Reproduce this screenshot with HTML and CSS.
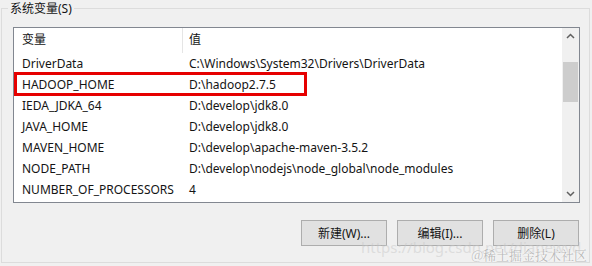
FILE: index.html
```html
<!DOCTYPE html>
<html lang="zh-CN">
<head>
    <meta charset="UTF-8">
    <title>系统变量</title>
    <link rel="stylesheet" href="styles.css">
</head>
<body>
    <section class="group">
        <span class="group-title">系统变量(S)</span>
        <div class="list-box">
            <div class="list">
                <div class="row head">
                    <span class="col-name">变量</span>
                    <span class="col-value">值</span>
                </div>
                <div class="row">
                    <span class="col-name">DriverData</span>
                    <span class="col-value">C:\Windows\System32\Drivers\DriverData</span>
                </div>
                <div class="row">
                    <span class="highlight"></span>
                    <span class="col-name">HADOOP_HOME</span>
                    <span class="col-value">D:\hadoop2.7.5</span>
                </div>
                <div class="row">
                    <span class="col-name">IEDA_JDKA_64</span>
                    <span class="col-value">D:\develop\jdk8.0</span>
                </div>
                <div class="row">
                    <span class="col-name">JAVA_HOME</span>
                    <span class="col-value">D:\develop\jdk8.0</span>
                </div>
                <div class="row">
                    <span class="col-name">MAVEN_HOME</span>
                    <span class="col-value">D:\develop\apache-maven-3.5.2</span>
                </div>
                <div class="row">
                    <span class="col-name">NODE_PATH</span>
                    <span class="col-value">D:\develop\nodejs\node_global\node_modules</span>
                </div>
                <div class="row">
                    <span class="col-name">NUMBER_OF_PROCESSORS</span>
                    <span class="col-value">4</span>
                </div>
            </div>
            <div class="scrollbar">
                <svg class="arrow" width="17" height="17" viewBox="0 0 17 17">
                    <path d="M5 10 L8.5 6.5 L12 10" fill="none" stroke="#606060" stroke-width="1.5"/>
                </svg>
                <div class="track">
                    <div class="thumb"></div>
                </div>
                <svg class="arrow" width="17" height="17" viewBox="0 0 17 17">
                    <path d="M5 7 L8.5 10.5 L12 7" fill="none" stroke="#606060" stroke-width="1.5"/>
                </svg>
            </div>
        </div>
        <div class="buttons">
            <button class="btn">新建(W)...</button>
            <button class="btn">编辑(I)...</button>
            <button class="btn">删除(L)</button>
        </div>
        <span class="watermark-url">https://blog.csdn.net/dianewyd</span>
        <span class="watermark">@稀土掘金技术社区</span>
    </section>
</body>
</html>
```

FILE: styles.css
```css
* {
  margin: 0;
  padding: 0;
  box-sizing: border-box;
}

body {
  background: #f0f0f0;
  font-family: "Noto Sans", "Noto Sans CJK SC", sans-serif;
  font-size: 12px;
  color: #141414;
  padding: 8px 2px 3px 1px;
}

.group {
  position: relative;
  border: 1px solid #dcdcdc;
  height: 255px;
}

.group-title {
  display: block;
  width: max-content;
  margin: -8px 0 0 6px;
  padding: 0 2px;
  background: #f0f0f0;
  line-height: 16px;
}

.list-box {
  display: flex;
  width: 567px;
  height: 176px;
  margin: 10px 0 0 11px;
  border: 1px solid #828790;
  background: #fff;
}

.list {
  flex: 1;
}

.row {
  position: relative;
  display: flex;
  height: 21px;
  align-items: center;
  line-height: 14px;
  white-space: nowrap;
}

.row.head {
  height: 25px;
  align-items: stretch;
}

.col-name {
  width: 168px;
  padding-left: 8px;
}

.col-value {
  padding-left: 7px;
}

.head .col-name,
.head .col-value {
  display: flex;
  align-items: center;
  padding-bottom: 2px;
}

.head .col-value {
  border-left: 1px solid #e5e5e5;
  padding-left: 6px;
}

.highlight {
  position: absolute;
  left: 0;
  top: -2px;
  width: 293px;
  height: 24px;
  border: 3px solid #e60000;
}

.scrollbar {
  width: 17px;
  display: flex;
  flex-direction: column;
  background: #f0f0f0;
}

.arrow {
  display: block;
  flex: none;
}

.track {
  flex: 1;
  padding: 17px 1px 0 1px;
}

.thumb {
  height: 40px;
  background: #cdcdcd;
}

.buttons {
  display: flex;
  justify-content: flex-end;
  gap: 10px;
  margin-top: 17px;
  padding-right: 10px;
}

.btn {
  width: 86px;
  height: 26px;
  background: #e1e1e1;
  border: 1px solid #adadad;
  font: inherit;
  color: #141414;
}

.watermark-url {
  position: absolute;
  left: 359px;
  top: 228px;
  font-size: 15px;
  color: rgba(200, 200, 200, 0.5);
  white-space: nowrap;
}

.watermark {
  position: absolute;
  right: 2px;
  top: 238px;
  font-family: "Noto Serif CJK SC", "Noto Sans CJK SC", serif;
  font-size: 13px;
  line-height: 16px;
  color: #b8b8b8;
  text-shadow: 0 0 2px #fff, 0 0 1px #fff;
  white-space: nowrap;
}
```
